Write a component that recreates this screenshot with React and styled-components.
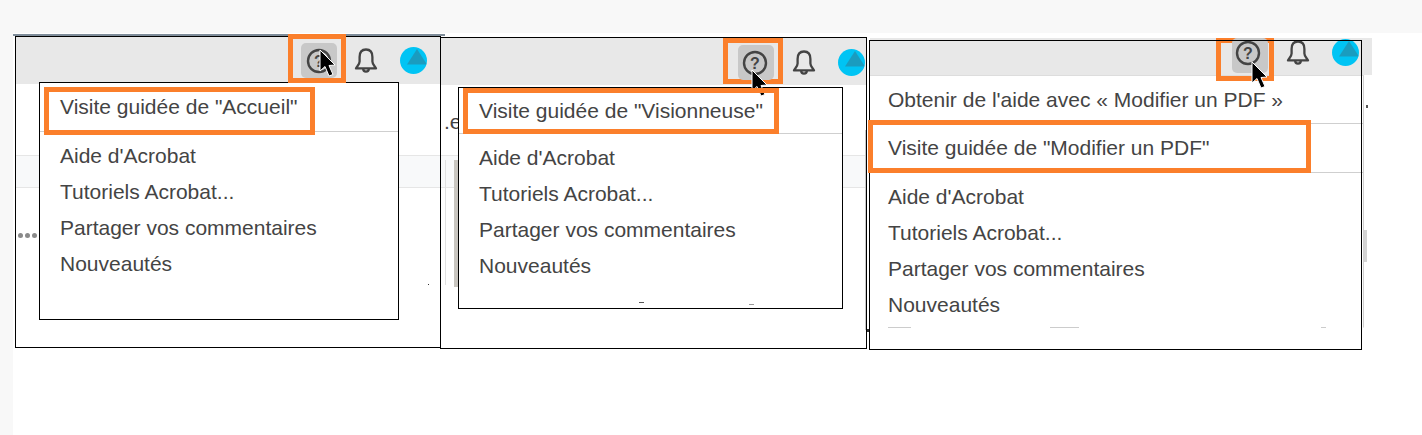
import styled, { createGlobalStyle } from "styled-components"

const GlobalStyle = createGlobalStyle`
    html, body {
        margin: 0;
        padding: 0;
        background: #fff;
    }
    body {
        font-family: "Liberation Sans", Arial, sans-serif;
    }
`
// one background layer: leftovers of the captured page behind the menus
const scrap = (x, y, w, h, c) => `linear-gradient(${c}, ${c}) ${x}px ${y}px / ${w}px ${h}px no-repeat`
const band = y => [
    scrap(1, y, 425, 1, "#e6e6e6"),
    scrap(1, y + 32, 425, 1, "#e6e6e6"),
    scrap(1, y, 425, 32, "#f8f9fa"),
]

const Page = styled.div`
    width: 1422px;
    height: 435px;
    overflow: hidden;
    background: linear-gradient(to right, #f8f8f8 13px, #fff 13px);
`
const TopStrip = styled.div`
    height: 33px;
    background: #f8f8f8;
`
const Shots = styled.div`
    display: flex;
    align-items: flex-start;
    height: 330px;
    padding-left: 15px;
    background: ${[
        scrap(13, 1, 432, 2, "#7e8c99"),
        scrap(867, 296, 2, 3, "#333"),
        scrap(1366, 72, 2, 3, "#555"),
        scrap(1364, 197, 3, 32, "#d4d4d4"),
    ].join(", ")};
`
const Panel = styled.section`
    position: relative;
    isolation: isolate;
    flex: none;
    box-sizing: border-box;
    width: ${p => p.$width}px;
    height: ${p => p.$height}px;
    margin-top: ${p => p.$top}px;
    margin-left: ${p => p.$left}px;
    background: ${p => [...p.$scraps, "#fff"].join(", ")};

    &::after {
        content: "";
        position: absolute;
        inset: 0;
        z-index: 2;
        border: 1px solid #000;
        pointer-events: none;
    }
`
const Toolbar = styled.div`
    display: flex;
    justify-content: flex-end;
    align-items: flex-start;
    height: ${p => p.$height}px;
    margin: ${p => p.$offset}px ${p => p.$overhang}px 0 1px;
    padding-right: ${p => p.$padding}px;
    background: #e8e8e8;
`
const HelpSlot = styled.div`
    position: relative;
    z-index: ${p => p.$layer};
    box-sizing: border-box;
    flex: none;
    width: ${p => p.$width}px;
    height: ${p => p.$height}px;
    margin-top: ${p => p.$top}px;
    padding-left: ${p => p.$padLeft}px;
    border: 5px solid #fb7f2b;
`
const HelpButton = styled.div`
    display: flex;
    align-items: center;
    justify-content: center;
    width: 36px;
    height: 35px;
    margin-top: ${p => p.$top}px;
    border-radius: 5px;
    background: #c8c8c8;

    svg {
        margin: ${p => p.$nudgeY}px ${p => p.$nudgeX}px 0 0;
    }
`
const QuestionMark = styled.text`
    font-family: "Liberation Sans", Arial, sans-serif;
    font-size: 16px;
    font-weight: 700;
    fill: #444;
`
const Pointer = styled.svg`
    position: absolute;
    left: ${p => p.$x}px;
    top: ${p => p.$y}px;
    z-index: 4;
`
const BellIcon = styled.svg`
    flex: none;
    margin: ${p => p.$top}px 22px 0 ${p => p.$left}px;
`
const Avatar = styled.svg`
    flex: none;
    margin-top: ${p => p.$top}px;
`
const Menu = styled.div`
    position: relative;
    box-sizing: border-box;
    width: ${p => p.$width}px;
    height: ${p => p.$height}px;
    margin: ${p => p.$top}px 0 0 ${p => p.$left}px;
    background: ${p => [...p.$scraps, "#fff"].join(", ")};
    border: 1px solid #000;
`
// the third shot has no frame of its own, only a pale line on the right
const OpenMenu = styled(Menu)`
    border-color: #ddd #cfcfcf transparent transparent;
`
const HeadRow = styled.div`
    position: relative;
    box-sizing: border-box;
    display: flex;
    align-items: center;
    height: ${p => p.$height}px;
    padding-left: ${p => p.$indent}px;
    border-bottom: 1px solid #cfcfcf;
    font-size: 21px;
    color: #444;
`
const Highlight = styled.div`
    position: absolute;
    z-index: 3;
    box-sizing: border-box;
    left: ${p => p.$x}px;
    top: ${p => p.$y}px;
    width: ${p => p.$width}px;
    height: ${p => p.$height}px;
    border: 5px solid #fb7f2b;
`
const MenuList = styled.div`
    display: flex;
    flex-direction: column;
    padding: 6px 0 0 ${p => p.$indent}px;
`
const MenuItem = styled.div`
    display: flex;
    align-items: center;
    height: 36px;
    font-size: 21px;
    color: #444;
`
const Dots = styled.div`
    position: absolute;
    left: 3px;
    top: 197px;
    display: flex;
    gap: 2px;

    i {
        width: 5px;
        height: 5px;
        border-radius: 50%;
        background: #8a8a8a;
    }
`
const ClippedText = styled.span`
    position: absolute;
    left: 4px;
    top: 73px;
    font-size: 21px;
    color: #444;
`

const HelpGlyph = () => (
    <svg width="26" height="26" viewBox="0 0 26 26">
        <circle cx="13" cy="13" r="11" fill="none" stroke="#444" strokeWidth="2.4" />
        <QuestionMark x="13" y="18.5" textAnchor="middle">?</QuestionMark>
    </svg>
)

const Cursor = ({ x, y }) => (
    <Pointer $x={x} $y={y} width="18" height="30" viewBox="0 0 18 30">
        <path
            d="M1 1 L1 22 L6 17.5 L10 27 L14 25.5 L10 16.5 L16 16 Z"
            fill="#000"
            stroke="#fff"
            strokeWidth="1"
        />
    </Pointer>
)

const Bell = ({ top, left }) => (
    <BellIcon $top={top} $left={left} width="24" height="26" viewBox="0 0 24 26" fill="none" stroke="#444" strokeWidth="2.3" strokeLinejoin="round">
        <path d="M12 1.5 C7.4 1.5 5.6 5 5.6 9 V13.5 C5.6 16.5 2.8 18.4 2 20.4 H22 C21.2 18.4 18.4 16.5 18.4 13.5 V9 C18.4 5 16.6 1.5 12 1.5 Z" />
        <path d="M9.2 20.8 a2.8 2.8 0 0 0 5.6 0" />
    </BellIcon>
)

const Logo = ({ top, id }) => (
    <Avatar $top={top} width="27" height="27" viewBox="0 0 27 27">
        <clipPath id={id}>
            <circle cx="13.5" cy="13.5" r="13.5" />
        </clipPath>
        <circle cx="13.5" cy="13.5" r="13.5" fill="#00c4f4" />
        <path d="M7 17.5 L17 2 L27 17.5 Z" fill="#1a9cbf" clipPath={`url(#${id})`} />
    </Avatar>
)

const items = ["Aide d'Acrobat", "Tutoriels Acrobat...", "Partager vos commentaires", "Nouveautés"]

const Items = ({ indent }) => (
    <MenuList $indent={indent}>
        {items.map(item => <MenuItem key={item}>{item}</MenuItem>)}
    </MenuList>
)

const App = () => {
    return (
        <Page>
            <GlobalStyle />
            <TopStrip />
            <Shots>
                <Panel $width={426} $height={312} $top={3} $left={0} $scraps={[scrap(413, 248, 1, 1, "#333"), ...band(119)]}>
                    <Dots><i /><i /><i /></Dots>
                    <Toolbar $height={47} $offset={1} $overhang={1} $padding={13}>
                        <HelpSlot $layer={3} $width={58} $height={49} $top={-3} $padLeft={8}>
                            <HelpButton $top={4} $nudgeX={1} $nudgeY={1}><HelpGlyph /></HelpButton>
                            <Cursor x={26} y={10} />
                        </HelpSlot>
                        <Bell top={11} left={8} />
                        <Logo top={10} id="logo-a" />
                    </Toolbar>
                    <Menu $width={360} $height={238} $top={-2} $left={24} $scraps={[]}>
                        <HeadRow $height={49} $indent={20}>
                            Visite guidée de "Accueil"
                            <Highlight $x={4} $y={4} $width={271} $height={48} />
                        </HeadRow>
                        <Items indent={20} />
                    </Menu>
                </Panel>

                <Panel
                    $width={427}
                    $height={312}
                    $top={4}
                    $left={-1}
                    $scraps={[
                        scrap(5, 123, 1, 125, "#e0e0e0"),
                        scrap(14, 123, 4, 127, "#c9c6c0"),
                        scrap(425, 93, 2, 200, "#c8c8c8"),
                        ...band(118),
                    ]}
                >
                    <ClippedText>.e</ClippedText>
                    <Toolbar $height={47} $offset={1} $overhang={1} $padding={1}>
                        <HelpSlot $layer={3} $width={60} $height={46} $top={0} $padLeft={10}>
                            <HelpButton $top={2} $nudgeX={2} $nudgeY={1}><HelpGlyph /></HelpButton>
                            <Cursor x={23} y={26} />
                        </HelpSlot>
                        <Bell top={12} left={9} />
                        <Logo top={11} id="logo-b" />
                    </Toolbar>
                    <Menu
                        $width={385}
                        $height={222}
                        $top={2}
                        $left={18}
                        $scraps={[scrap(180, 214, 5, 1, "#555"), scrap(290, 216, 5, 1, "#999")]}
                    >
                        <HeadRow $height={46} $indent={20}>
                            Visite guidée de "Visionneuse"
                            <Highlight $x={4} $y={0} $width={316} $height={46} />
                        </HeadRow>
                        <Items indent={20} />
                    </Menu>
                </Panel>

                <Panel $width={493} $height={310} $top={7} $left={2} $scraps={[]}>
                    <Toolbar $height={37} $offset={-2} $overhang={-10} $padding={13}>
                        <HelpSlot $layer={1} $width={58} $height={43} $top={0} $padLeft={11}>
                            <HelpButton $top={-5} $nudgeX={4} $nudgeY={-5}><HelpGlyph /></HelpButton>
                            <Cursor x={30} y={18} />
                        </HelpSlot>
                        <Bell top={2} left={12} />
                        <Logo top={1} id="logo-c" />
                    </Toolbar>
                    <OpenMenu
                        $width={495}
                        $height={253}
                        $top={0}
                        $left={0}
                        $scraps={[
                            scrap(18, 251, 23, 1, "#ccc"),
                            scrap(180, 251, 29, 1, "#ccc"),
                            scrap(451, 251, 5, 1, "#ccc"),
                        ]}
                    >
                        <HeadRow $height={48} $indent={18}>
                            Obtenir de l'aide avec « Modifier un PDF »
                        </HeadRow>
                        <HeadRow $height={49} $indent={18}>
                            Visite guidée de "Modifier un PDF"
                            <Highlight $x={-2} $y={-4} $width={443} $height={53} />
                        </HeadRow>
                        <Items indent={18} />
                    </OpenMenu>
                </Panel>
            </Shots>
        </Page>
    )
}

export default App
